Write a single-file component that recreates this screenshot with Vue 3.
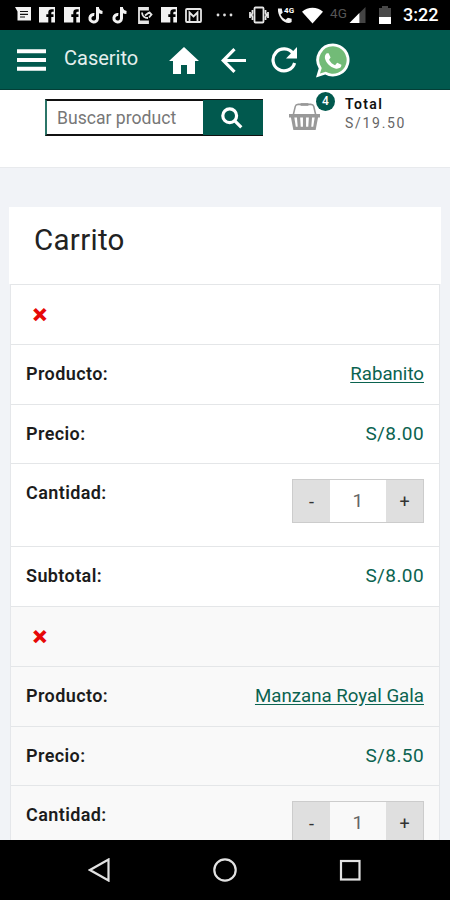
<template>
  <div class="screen">
    <div class="status-bar">
      <div class="notifications">
        <svg viewBox="0 0 17 17">
          <path fill="#f2f2f2" d="M0 0h16v13.500H2.500V4.500z" />
          <path class="cut" d="M5 4.500h8M5 7.300h8M5 10h5" />
        </svg>
        <svg v-for="n in 2" :key="n" viewBox="0 0 17 17"><path fill="#f2f2f2" fill-rule="evenodd" :d="facebook" /></svg>
        <svg v-for="n in 2" :key="'t' + n" viewBox="0 0 17 17"><path class="note" d="M9.500 0v11.500a3.800 3.800 0 1 1-3.200-4M9.500 1.500c.7 2.500 2.300 3.800 5 4" /></svg>
        <svg viewBox="0 0 17 17">
          <path class="thin" d="M12 3.500V1H3v15h9v-2.500M3 2.500h9M3 14.500h9" />
          <path class="thin" d="M6 5.500c.3 3.500 2.500 5.500 6 5.500M9 8.500l4-3M13 5l2.500 2.500L13 10.500" />
        </svg>
        <svg viewBox="0 0 17 17"><path fill="#f2f2f2" fill-rule="evenodd" :d="facebook" /></svg>
        <svg viewBox="0 0 17 17">
          <rect class="thin" x="1" y="2" width="15" height="13" rx="1" />
          <path class="thin" d="M4.500 15V5.500l4 4 4-4V15" />
        </svg>
      </div>
      <svg class="dots" viewBox="0 0 17 4">
        <circle cx="2" cy="2" r="1.400" /><circle cx="8.500" cy="2" r="1.400" /><circle cx="15" cy="2" r="1.400" />
      </svg>
      <svg class="vibrate" viewBox="0 0 20 18">
        <rect class="thin" x="5.500" y="1.500" width="9" height="15" rx="1" />
        <path class="thin" d="M3.500 4v3l-1 2 1 2v3M16.500 4v3l1 2-1 2v3M1 6v6M19 6v6" />
      </svg>
      <div class="volte">
        <svg viewBox="0 0 18 18"><path fill="#f2f2f2" d="M1 1.500h4l1 4.500-2.200 2c1.200 2.600 3 4.400 5.400 5.600l2.300-2.300 4 1.200V16c-1 .8-2 1-3 1C6 17 .5 9 1 1.500z" /></svg>
        <span>4G</span>
      </div>
      <svg class="wifi" viewBox="0 0 22 17"><path fill="#fff" d="M0 4.500C6-1 16-1 22 4.500L11 17z" /></svg>
      <span class="network">4G</span>
      <svg class="signal" viewBox="0 0 17 17">
        <path fill="#444" d="M17 0v17H0z" /><path fill="#fff" d="M10.500 6.500V17H0z" />
      </svg>
      <svg class="battery" viewBox="0 0 12 18">
        <path fill="#484848" d="M0 2h3V0h6v2h3v9H0z" /><path fill="#fff" d="M0 11h12v7H0z" />
      </svg>
      <span class="clock">3:22</span>
    </div>

    <header class="app-bar">
      <svg class="menu" viewBox="0 0 30 22"><path fill="#fff" d="M0 0h30v4H0zM0 9h30v4H0zM0 18h30v4H0z" /></svg>
      <span class="app-name">Caserito</span>
      <svg class="home" viewBox="0 0 30 27"><path fill="#fff" d="M15 0l15 14h-4v13h-8v-9h-6v9H4V14H0z" /></svg>
      <svg class="back" viewBox="0 0 25 25"><path class="arrow" d="M25 12.500H2.500M13.500 1.200L2.200 12.500l11.300 11.300" /></svg>
      <svg class="reload" viewBox="0 0 26 26">
        <path class="arrow" d="M22 6.500A11 11 0 1 0 23.600 16" /><path fill="#fff" d="M26 0v11.500H15z" />
      </svg>
      <svg class="whatsapp" viewBox="0 0 35 35">
        <path fill="#fff" d="M17.500 0a17 17 0 1 1-8 32L0 35l2.800-9.200A17 17 0 0 1 17.500 0z" />
        <path fill="#72bb77" d="M17.500 2.800a14.200 14.200 0 1 1-7.400 26.400l-6 1.800 1.800-5.800A14.200 14.200 0 0 1 17.500 2.800z" />
        <path fill="#fff" d="M11 10h2l2 4.500-1.600 2.100c1.600 2.800 3.600 4.600 6.200 5.700l2.200-2.500 4.300 2.200c.2 3.500-3.600 4.500-6.400 3.700C14.500 24.500 10 19.500 9.200 15.200c-.3-2.200.5-4.200 1.800-5.200z" />
      </svg>
    </header>

    <div class="toolbar">
      <form class="search" @submit.prevent>
        <input v-model="query" type="text" placeholder="Buscar product" />
        <button type="submit" aria-label="Buscar">
          <svg viewBox="0 0 22 22"><circle cx="8.700" cy="8.700" r="6.900" /><path d="M13.800 13.800l6.500 6.500" /></svg>
        </button>
      </form>
      <div class="basket">
        <svg viewBox="0 0 32 29">
          <path d="M4.500 13L6.500 4.500Q7 2.500 9.500 2.500h13q2.500 0 3 2L27.500 13" fill="none" stroke="#999" stroke-width="1.600" />
          <path d="M12 1.200h8v2.800h-8z" fill="#999" />
          <path fill="#999" fill-rule="evenodd" d="M0 12.500h32v3.500h-2l-2.500 13h-23L2 16H0zM5.500 16l1.500 9.500h2L8.200 16zM11.500 16l.6 9.500h2.300V16zM17.600 16v9.500h2.300l.6-9.500zM23.800 16l-.8 9.500h2l1.500-9.500z" />
        </svg>
        <span class="badge">4</span>
      </div>
      <div class="total">
        <strong>Total</strong>
        <span>S/19.50</span>
      </div>
    </div>

    <main class="content">
      <h1>Carrito</h1>
      <div class="cart">
        <section v-for="item in items" :key="item.name" class="item">
          <div class="row"><button class="remove">×</button></div>
          <div class="row"><b>Producto:</b><a href="#" @click.prevent>{{ item.name }}</a></div>
          <div class="row price"><b>Precio:</b><span>S/{{ item.price.toFixed(2) }}</span></div>
          <div class="row quantity">
            <b>Cantidad:</b>
            <div class="stepper">
              <button @click="item.qty > 1 && item.qty--">-</button>
              <span>{{ item.qty }}</span>
              <button @click="item.qty++">+</button>
            </div>
          </div>
          <div class="row"><b>Subtotal:</b><span>S/{{ (item.price * item.qty).toFixed(2) }}</span></div>
        </section>
      </div>
    </main>

    <nav class="nav-bar">
      <svg viewBox="0 0 24 24"><path d="M20.500 1.500v21L2 12z" /></svg>
      <svg viewBox="0 0 24 24"><circle cx="12" cy="12" r="10.700" /></svg>
      <svg viewBox="0 0 24 24"><rect x="3" y="3" width="18.500" height="18.500" /></svg>
    </nav>
  </div>
</template>

<script setup>
import { ref } from 'vue'

const facebook = 'M0 0h16v15.500h-3.700v-5.500h2.200V7.300h-2.200V6q0-1.200 1.200-1.200h1.200V2.300h-2Q9.300 2.300 9.300 5.500v1.800H7.300V10h2v5.500H0z'

const query = ref('')
const items = ref([
  { name: 'Rabanito', price: 8, qty: 1 },
  { name: 'Manzana Royal Gala', price: 8.5, qty: 1 }
])
</script>

<style>
body {
  margin: 0;
}
</style>

<style scoped>
.screen {
  display: flex;
  flex-direction: column;
  width: 450px;
  height: 900px;
  overflow: hidden;
  background: #f1f3f7;
  font-family: Roboto, sans-serif;
  color: #222;
}

svg {
  display: block;
  flex-shrink: 0;
}

button {
  padding: 0;
  font-family: inherit;
}

/* status bar */
.status-bar {
  display: flex;
  align-items: center;
  flex-shrink: 0;
  height: 30px;
  padding-left: 15px;
  background: #000;
  color: #fff;
}

.notifications {
  display: flex;
  gap: 7.3px;
}

.notifications svg {
  width: 17px;
  height: 17px;
}

.cut {
  stroke: #111;
  stroke-width: 1.2;
}

.note {
  fill: none;
  stroke: #f2f2f2;
  stroke-width: 3;
}

.thin {
  fill: none;
  stroke: #e6e6e6;
  stroke-width: 1.8;
}

.dots {
  width: 17px;
  height: 4px;
  margin-left: 14px;
  fill: #ddd;
}

.vibrate {
  width: 20px;
  height: 18px;
  margin-left: 16px;
}

.volte {
  position: relative;
  margin-left: 8px;
}

.volte svg {
  width: 17px;
  height: 17px;
}

.volte span {
  position: absolute;
  top: 0;
  left: 7px;
  font-size: 8px;
  font-weight: 700;
  line-height: 8px;
}

.wifi {
  width: 21px;
  height: 17px;
  margin-left: 8px;
}

.network {
  width: 19px;
  margin: -4px 0 0 7px;
  font-size: 13.5px;
  line-height: 14px;
  color: #555;
}

.signal {
  width: 17px;
  height: 16px;
}

.battery {
  width: 12px;
  height: 18px;
  margin-left: 13px;
}

.clock {
  margin-left: 12px;
  font-size: 18px;
  font-weight: 500;
  line-height: 32px;
}

/* app bar */
.app-bar {
  display: flex;
  align-items: center;
  box-sizing: border-box;
  flex-shrink: 0;
  height: 60px;
  padding: 1px 0 0 17px;
  border-bottom: 1px solid #033f37;
  background: #01594e;
}

.menu {
  width: 29px;
  height: 22px;
}

.app-name {
  width: 105px;
  margin: -4px 0 0 18px;
  font-size: 20px;
  color: #e4efed;
}

.home {
  width: 30px;
  height: 27px;
}

.back {
  width: 25px;
  height: 25px;
  margin-left: 22px;
}

.reload {
  width: 26px;
  height: 26px;
  margin-left: 25px;
}

.arrow {
  fill: none;
  stroke: #fff;
  stroke-width: 3.2;
}

.whatsapp {
  width: 34px;
  height: 35px;
  margin-left: 19px;
}

/* search and basket */
.toolbar {
  display: flex;
  align-items: flex-start;
  box-sizing: border-box;
  flex-shrink: 0;
  height: 78px;
  padding: 9px 0 0 45px;
  border-bottom: 1px solid #e8eaed;
  background: #fff;
}

.search {
  display: flex;
  width: 218px;
  height: 37px;
}

.search input {
  box-sizing: border-box;
  width: 158px;
  padding: 0 10px;
  border: 2px solid #111;
  border-left-color: #2b7568;
  border-right: 0;
  border-radius: 0;
  outline: 0;
  font: 17.6px Roboto, sans-serif;
  color: #333;
}

.search input::placeholder {
  color: #777;
  opacity: 1;
}

.search button {
  display: flex;
  align-items: center;
  justify-content: center;
  width: 60px;
  padding-right: 3px;
  border: 0;
  border-top: 1px solid #111;
  border-bottom: 1px solid #111;
  background: #01594e;
}

.search button svg {
  width: 22px;
  height: 22px;
  fill: none;
  stroke: #fff;
  stroke-width: 3.2;
}

.basket {
  position: relative;
  margin: 2px 0 0 26px;
}

.basket svg {
  width: 31px;
  height: 30px;
}

.badge {
  position: absolute;
  top: -9px;
  left: 27px;
  width: 19px;
  height: 19px;
  border-radius: 50%;
  background: #01594e;
  font-size: 12px;
  font-weight: 500;
  line-height: 19px;
  text-align: center;
  color: #fff;
}

.total {
  display: flex;
  flex-direction: column;
  margin: -4px 0 0 25px;
  font-size: 14px;
  line-height: 18.5px;
  letter-spacing: 1.7px;
  color: #666;
}

.total strong {
  font-weight: 600;
  letter-spacing: 1.4px;
  color: #111;
}

/* cart */
.content {
  flex: 1;
  min-height: 0;
  overflow-y: auto;
  padding: 39px 9px 0;
  scrollbar-width: none;
}

h1 {
  box-sizing: border-box;
  height: 77px;
  margin: 0;
  padding: 15px 25px 0;
  background: #fff;
  font-size: 29.5px;
  font-weight: 400;
  line-height: 36px;
  letter-spacing: 0.3px;
}

.cart {
  width: 430px;
  margin-left: 1px;
  box-sizing: border-box;
  border: solid #e5e7ea;
  border-width: 0 1px;
}

.item {
  background: #fff;
}

.item:nth-child(even) {
  background: #f9f9f9;
}

.row {
  display: flex;
  align-items: center;
  justify-content: space-between;
  box-sizing: border-box;
  height: 60px;
  padding: 0 15px 2px;
  border-top: 1px solid #e4e6e8;
  font-size: 18.7px;
  color: #0b6350;
}

.row.price {
  height: 59px;
}

.row span {
  font-size: 19px;
  letter-spacing: 0.4px;
}

.row b {
  font-size: 18px;
  font-weight: 600;
  letter-spacing: 0.4px;
  color: #1c1c1c;
}

.row a {
  color: #0b6350;
  text-underline-offset: 2px;
}

.remove {
  width: 28px;
  height: 28px;
  margin-top: 2px;
  border: 0;
  background: none;
  font-size: 28px;
  font-weight: 900;
  line-height: 28px;
  color: #e60808;
}

.row.quantity {
  align-items: flex-start;
  height: 83px;
  padding-top: 15px;
}

.quantity b {
  line-height: 28px;
}

.stepper {
  display: flex;
  box-sizing: border-box;
  width: 132px;
  height: 44px;
  border: 1px solid #ccc;
}

.stepper button {
  width: 37px;
  border: 0;
  background: #dfdfdf;
  font-size: 18px;
  color: #333;
}

.stepper span {
  flex: 1;
  line-height: 42px;
  text-align: center;
  color: #666;
}

/* system navigation */
.nav-bar {
  display: flex;
  align-items: center;
  justify-content: center;
  gap: 101px;
  flex-shrink: 0;
  height: 60px;
  background: #000;
}

.nav-bar svg {
  width: 24px;
  height: 24px;
  fill: none;
  stroke: #e2e2e2;
  stroke-width: 2.2;
}
</style>
